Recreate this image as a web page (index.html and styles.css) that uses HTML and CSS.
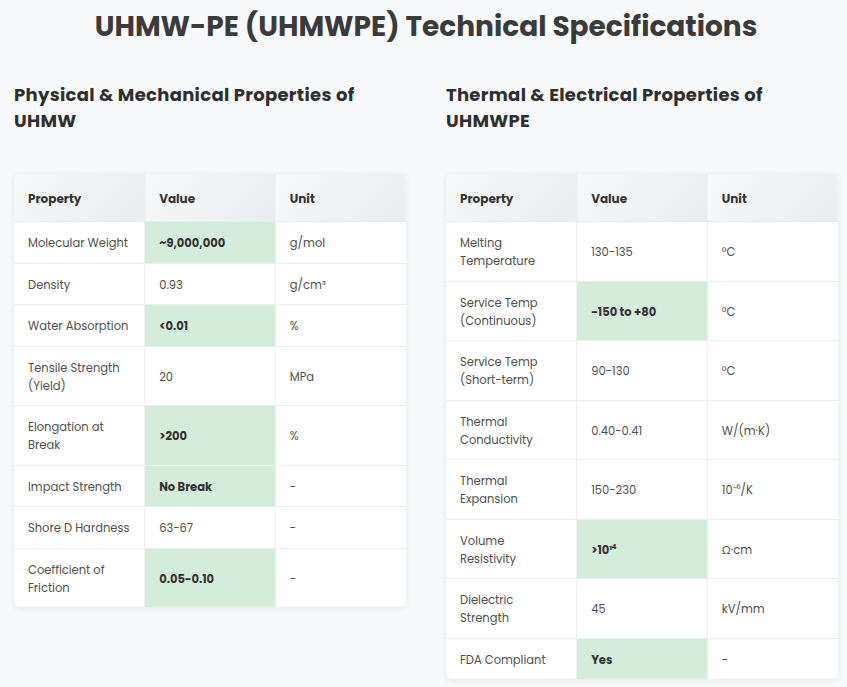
FILE: index.html
```html
<!DOCTYPE html>
<html lang="en">
<head>
<meta charset="utf-8">
<title>UHMW-PE Technical Specifications</title>
<link rel="stylesheet" href="styles.css">
</head>
<body>
<div class="page">
  <h1 class="title">UHMW-PE (UHMWPE) Technical Specifications</h1>
  <div class="columns">
    <section class="col">
      <h3 class="sub">Physical &amp; Mechanical Properties of UHMW</h3>
      <div class="card">
        <table class="spec">
          <thead><tr><th>Property</th><th>Value</th><th>Unit</th></tr></thead>
          <tbody>
            <tr><td>Molecular Weight</td><td class="hi">~9,000,000</td><td>g/mol</td></tr>
            <tr><td>Density</td><td>0.93</td><td>g/cm³</td></tr>
            <tr><td>Water Absorption</td><td class="hi">&lt;0.01</td><td>%</td></tr>
            <tr><td>Tensile Strength (Yield)</td><td>20</td><td>MPa</td></tr>
            <tr><td>Elongation at Break</td><td class="hi">&gt;200</td><td>%</td></tr>
            <tr><td>Impact Strength</td><td class="hi">No Break</td><td>-</td></tr>
            <tr><td>Shore D Hardness</td><td>63-67</td><td>-</td></tr>
            <tr><td>Coefficient of Friction</td><td class="hi">0.05-0.10</td><td>-</td></tr>
          </tbody>
        </table>
      </div>
    </section>
    <section class="col">
      <h3 class="sub">Thermal &amp; Electrical Properties of UHMWPE</h3>
      <div class="card">
        <table class="spec">
          <thead><tr><th>Property</th><th>Value</th><th>Unit</th></tr></thead>
          <tbody>
            <tr><td>Melting Temperature</td><td>130-135</td><td>°C</td></tr>
            <tr><td>Service Temp (Continuous)</td><td class="hi">-150 to +80</td><td>°C</td></tr>
            <tr><td>Service Temp (Short-term)</td><td>90-130</td><td>°C</td></tr>
            <tr><td>Thermal Conductivity</td><td>0.40-0.41</td><td>W/(m·K)</td></tr>
            <tr><td>Thermal Expansion</td><td>150-230</td><td>10⁻⁶/K</td></tr>
            <tr><td>Volume<br>Resistivity</td><td class="hi">&gt;10¹⁴</td><td>Ω·cm</td></tr>
            <tr><td>Dielectric<br>Strength</td><td>45</td><td>kV/mm</td></tr>
            <tr><td>FDA Compliant</td><td class="hi">Yes</td><td>-</td></tr>
          </tbody>
        </table>
      </div>
    </section>
  </div>
</div>
</body>
</html>
```

FILE: styles.css
```css
html, body {
  margin: 0;
  padding: 0;
  background: #f8f9fa;
}
body {
  font-family: "Poppins", "Open Sans", "Noto Sans", sans-serif;
  color: #333;
}
.page {
  padding: 10px 9px 20px 14px;
}
.title {
  margin: 0;
  text-align: center;
  font-size: 28px;
  line-height: 34px;
  font-weight: 700;
  color: #3b3b3b;
}
.columns {
  display: grid;
  grid-template-columns: 392px 392px;
  column-gap: 40px;
  margin-top: 38px;
}
.sub {
  margin: 0 0 40px 0;
  font-size: 18px;
  line-height: 26px;
  font-weight: 700;
  color: #2f2f2f;
  letter-spacing: 0.3px;
}
.card {
  background: #fff;
  border-radius: 6px;
  overflow: hidden;
  box-shadow: 0 1px 6px rgba(0, 0, 0, 0.08);
}
.spec {
  width: 100%;
  border-collapse: collapse;
  table-layout: fixed;
  font-size: 11.5px;
  line-height: 18px;
}
.spec th {
  text-align: left;
  font-size: 12px;
  font-weight: 700;
  color: #333;
  padding: 16px 14px 13px 14px;
  background: linear-gradient(135deg, #f8f9fa 0%, #e9ecef 100%);
  border-right: 1px solid #eef0f2;
  border-bottom: 1px solid #e9ecef;
}
.spec td {
  padding: 12px 10px 10.5px 14px;
  color: #505050;
  border-right: 1px solid #eceef0;
  border-bottom: 1px solid #eceef0;
  vertical-align: middle;
}
.spec th:last-child, .spec td:last-child {
  border-right: none;
}
.spec tr:last-child td {
  border-bottom: none;
}
.spec td.hi {
  background: #d4edda;
  font-weight: 700;
  color: #333;
}
```
